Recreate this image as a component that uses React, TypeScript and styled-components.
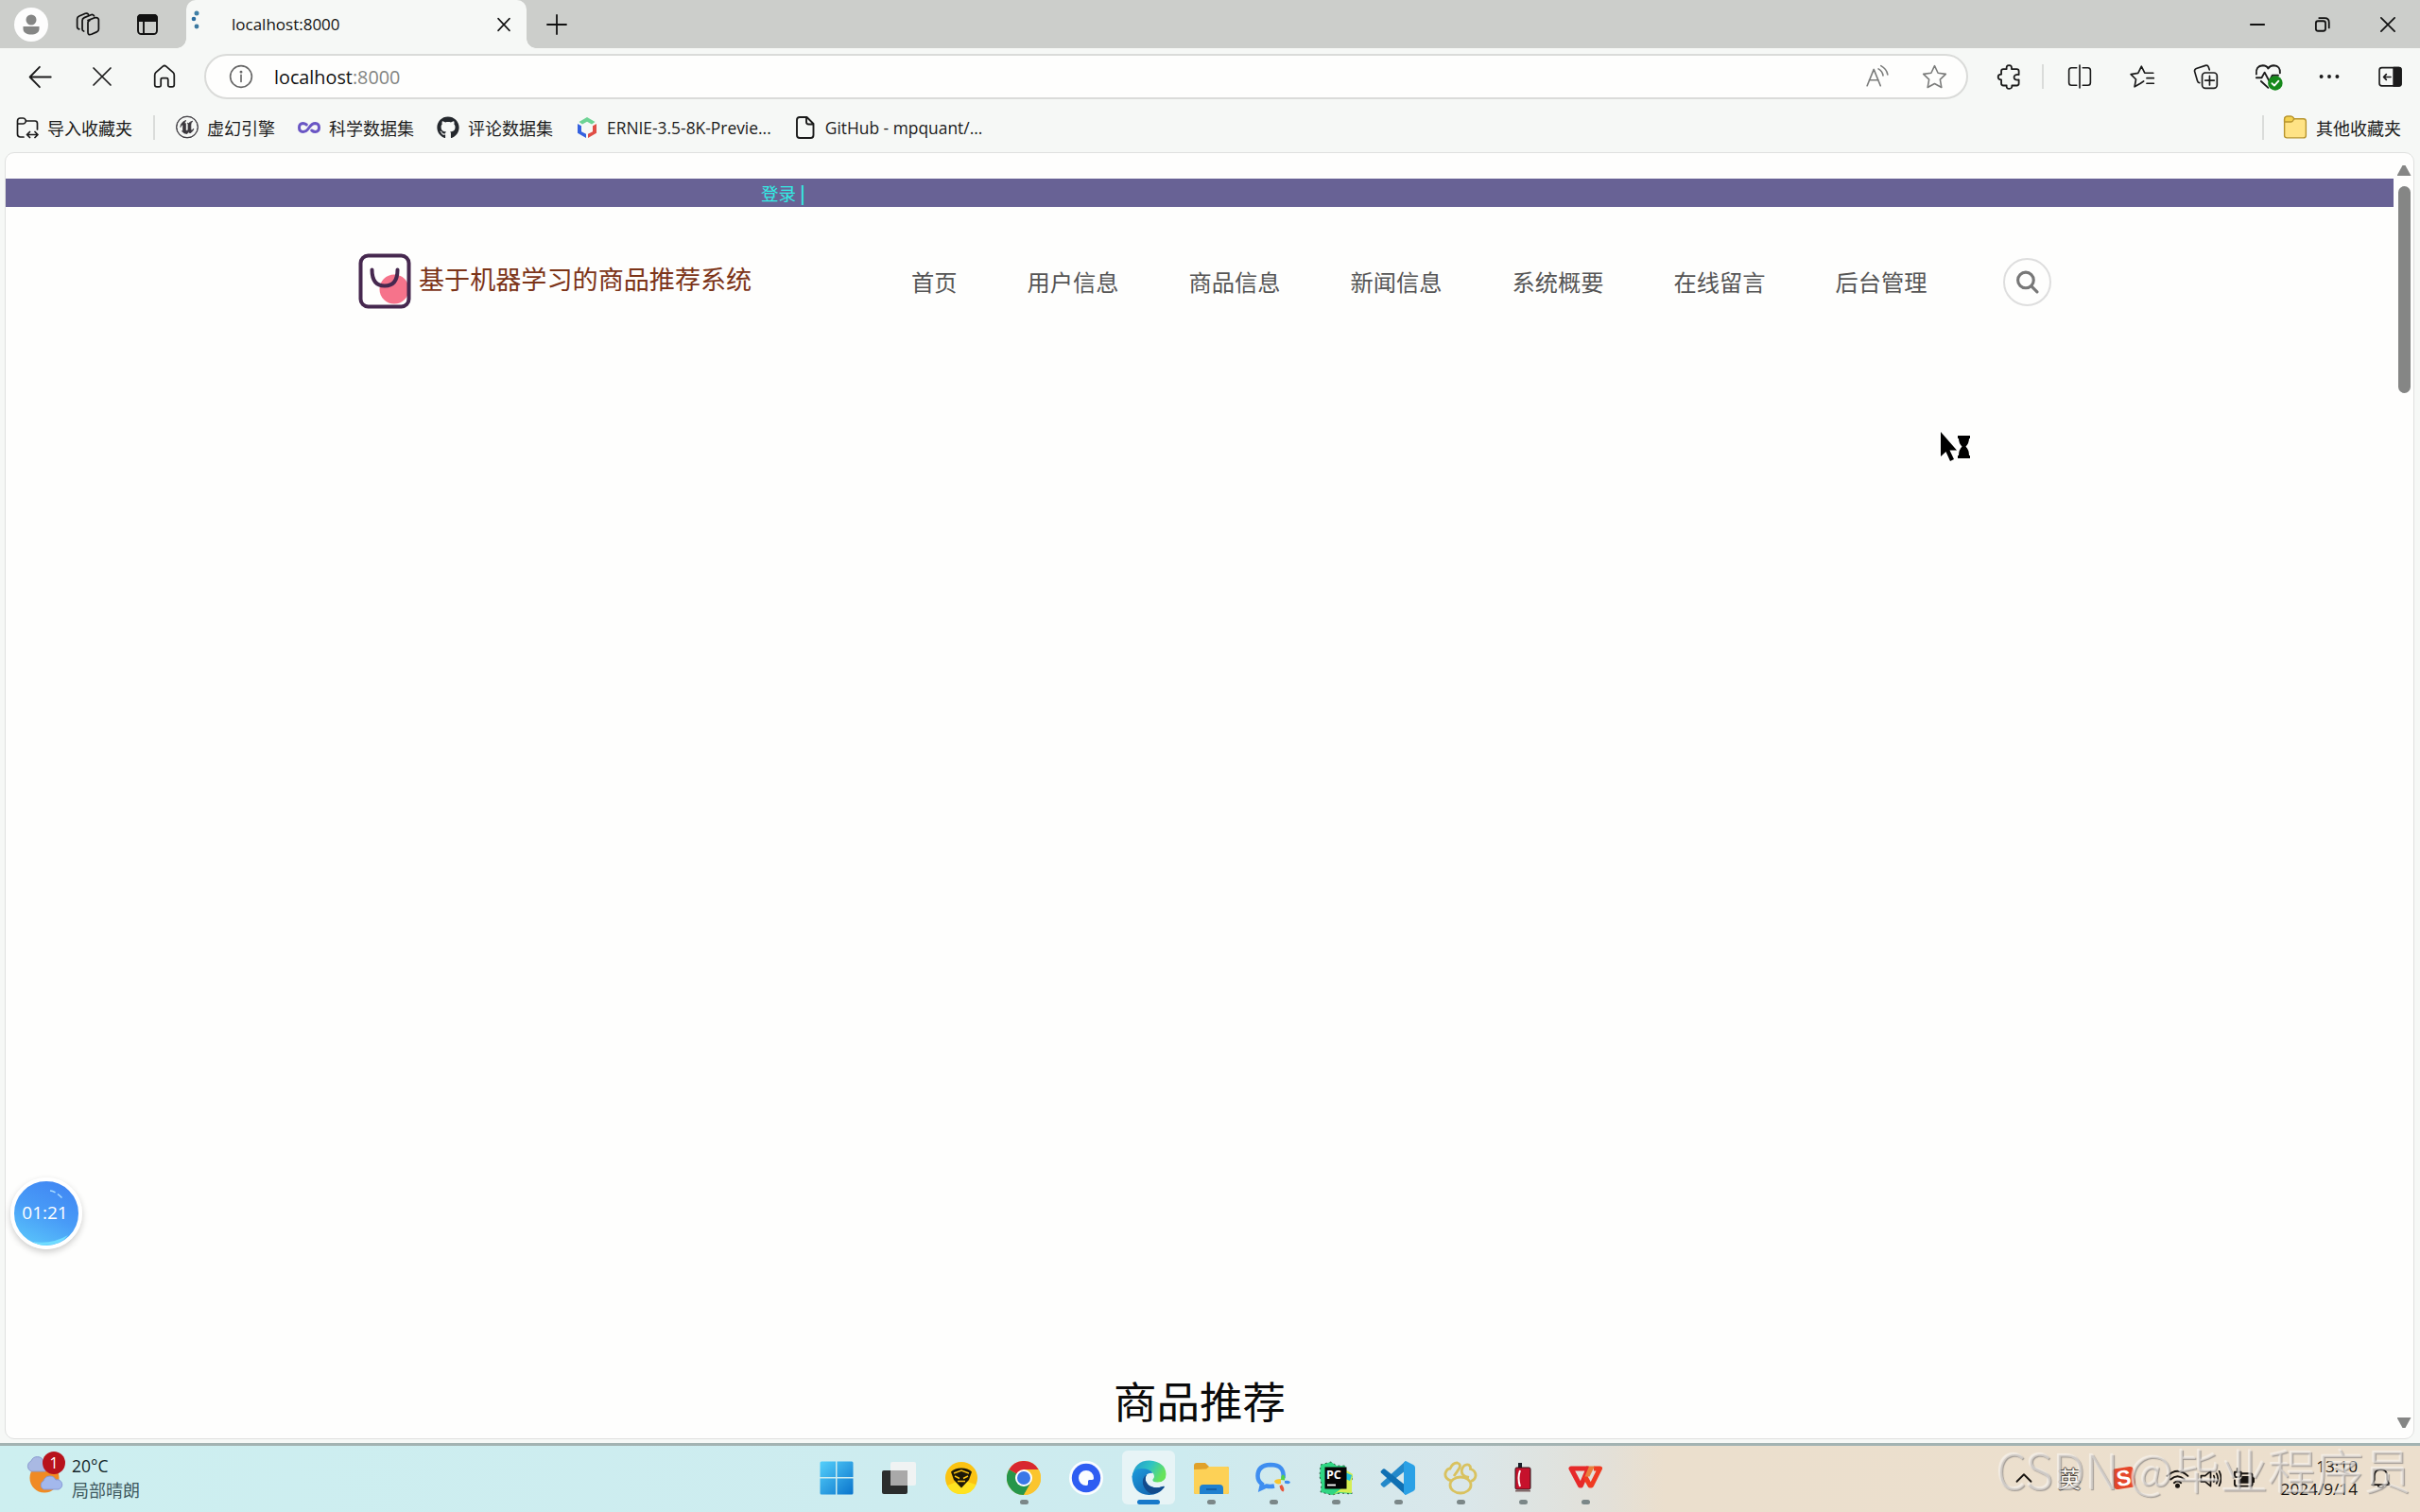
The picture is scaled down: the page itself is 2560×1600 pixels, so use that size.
import { ReactNode } from "react";
import { FaGithub } from "react-icons/fa";
import { SiUnrealengine } from "react-icons/si";
import styled, { createGlobalStyle } from "styled-components";

const menus = ["首页", "用户信息", "商品信息", "新闻信息", "系统概要", "在线留言", "后台管理"];

const App = () => {
  return (
    <Screen>
      <GlobalStyle />
      <TabStrip />
      <Toolbar />
      <Bookmarks />
      <Viewport />
      <Taskbar />
      <Recorder />
      <BusyCursor />
      <Watermark>
        CSDN <span>@毕业程序员</span>
      </Watermark>
    </Screen>
  );
};

const Icon = ({ size = 24, w = 1.7, children }: { size?: number; w?: number; children: ReactNode }) => (
  <IconSvg width={size} height={size} viewBox="0 0 24 24" strokeWidth={w}>
    {children}
  </IconSvg>
);

const TabStrip = () => (
  <TabStripContainer>
    <Slot $w={66}>
      <Avatar>
        <svg width="18" height="22" viewBox="0 0 18 22" fill="#858685">
          <circle cx="9" cy="6" r="5.5" />
          <path d="M.5 13h17v2.500c0 4-4 6-8.500 6s-8.500-2-8.500-6z" />
        </svg>
      </Avatar>
    </Slot>
    <Slot $w={54}>
      <Icon size={26} w={1.6}>
        <path d="M12 8l6-2.500q4-1 4.500 1.500v9.500q0 2-2 2.800l-5 2.200q-3.500 1.200-3.500-2V10q0-1.500 2-2.300z" />
        <path d="M8 18.500q-1.500-.500-1.500-2V8q0-2 2-2.800L15 2.500q1.800-.700 3 1" />
        <path d="M3.500 16.500Q1.500 16 1.500 14V6.500q0-2 2-2.800L9.500 1.200q1.800-.700 3 .800" />
      </Icon>
    </Slot>
    <Slot $w={72}>
      <Icon size={24} w={1.9}>
        <rect x="2" y="2" width="20" height="20" rx="3.500" />
        <path d="M2 8V5q0-3 3-3h14q3 0 3 3v3z" fill="currentColor" />
        <path d="M8 8v14" />
      </Icon>
    </Slot>
    <Tab>
      <Spinner width="14" height="24" viewBox="0 0 14 24">
        <circle cx="8" cy="4" r="2.500" fill="#3f7fa6" />
        <circle cx="5" cy="10" r="2.300" fill="#2b6da0" />
        <circle cx="8" cy="18" r="2.400" fill="#3b789f" />
      </Spinner>
      <TabTitle>localhost:8000</TabTitle>
      <Slot $w={48}>
        <Icon size={18} w={2.1}>
          <path d="M4 3.500l16 17M20 3.500l-16 17" />
        </Icon>
      </Slot>
    </Tab>
    <Slot $w={64}>
      <Icon size={24} w={1.8}>
        <path d="M12 2v20M2 12h20" />
      </Icon>
    </Slot>
    <WindowControls>
      <Slot $w={69}>
        <Icon size={20} w={2.4}>
          <path d="M3.500 12h17" />
        </Icon>
      </Slot>
      <Slot $w={69}>
        <Icon size={18} w={2.4}>
          <rect x="2.500" y="7" width="13.500" height="14" rx="3" />
          <path d="M7 2.800h8q6 0 6 6.200v7.500" />
        </Icon>
      </Slot>
      <Slot $w={69}>
        <Icon size={18} w={2.3}>
          <path d="M2.500 2.500l19 19M21.500 2.500l-19 19" />
        </Icon>
      </Slot>
    </WindowControls>
  </TabStripContainer>
);

const Toolbar = () => (
  <ToolbarContainer>
    <Slot $w={64}>
      <Icon size={27} w={1.6}>
        <path d="M22 12H2.500M11.500 2.500L2.300 12l9.200 9.500" />
      </Icon>
    </Slot>
    <Slot $w={68}>
      <Icon size={24} w={1.7}>
        <path d="M3 3l18 18M21 3L3 21" />
      </Icon>
    </Slot>
    <Slot $w={64}>
      <Icon size={26} w={1.6}>
        <path d="M2.500 10.500Q2.500 9 3.600 8L10.500 2q1.500-1.200 3 0l6.900 6q1.100 1 1.100 2.500V20q0 2-2 2h-2.500q-1.500 0-1.500-1.500V15q0-1.500-1.500-1.500h-4Q8.500 13.500 8.500 15v5.500Q8.500 22 7 22H4.500q-2 0-2-2z" />
      </Icon>
    </Slot>
    <AddressBar>
      <Slot $w={74}>
        <Icon size={26} w={1.5}>
          <circle cx="12" cy="12" r="10.500" />
          <path d="M12 10.500v6.500" />
          <circle cx="12" cy="7.500" r=".600" fill="currentColor" />
        </Icon>
      </Slot>
      <Url>
        localhost<span>:8000</span>
      </Url>
      <Slot $w={60} $color="#7b7c7b">
        <Icon size={26} w={1.5}>
          <path d="M2 21L8.500 5l6.500 16M4 15.500h9M13 4.500q4 2.200 4.500 6.500M15.500 1.500Q21 4.500 22 10" />
        </Icon>
      </Slot>
      <Slot $w={60} $color="#7b7c7b">
        <Icon size={27} w={1.4}>
          <path d={STAR} />
        </Icon>
      </Slot>
    </AddressBar>
    <Slot $w={60}>
      <Icon size={27} w={1.6}>
        <path d="M6.500 4.500h3q-.500-3.500 2.300-3.500t2.400 3.500H19q2 0 2 2v3.300q-4.500-.500-4.500 2.500t4.500 2.300v3.400q0 2-2 2h-4.500q.300 3-2.600 3t-2.400-3h-3q-2 0-2-2v-3.500q-3 0-3-2.500t3-2.500V6.500q0-2 2-2z" />
      </Icon>
    </Slot>
    <Divider $m={5} $h={26} />
    <Slot $w={66}>
      <Icon size={26} w={1.5}>
        <path d="M12 1v22M9 3.500H4q-2.500 0-2.500 2.500v12q0 2.500 2.500 2.500h5M15 3.500h5q2.500 0 2.500 2.500v12q0 2.500-2.500 2.500h-5" />
      </Icon>
    </Slot>
    <Slot $w={67}>
      <Icon size={27} w={1.5}>
        <path d="M13 16l-3 2-5.500 3.200 1.300-7L1 9.400l6.800-1L11 2l3 6.200h8M16 13h6.500M16 18h6.500" />
      </Icon>
    </Slot>
    <Slot $w={67}>
      <Icon size={27} w={1.5}>
        <rect x="8.500" y="8" width="14" height="14.500" rx="3" />
        <path d="M15.500 11v8.500M11.300 15.200h8.500M6 17.500q-1.500-.300-2-2L1.500 7q-.600-2.200 1.500-3l8.500-2.800q2.200-.600 3 1.500l.800 2.500" />
      </Icon>
    </Slot>
    <Slot $w={65}>
      <Icon size={30} w={1.5}>
        <path d="M1.500 10Q.800 3 7 2.600q3.200 0 4.500 2.600Q13 2.600 16.200 2.600 22 3 21.500 9M1.500 13H6l2.500-4.500 4 7.500L15 11h5M5.500 16l6 5.500" />
        <circle cx="17.500" cy="17.500" r="6.200" fill="#16891b" stroke="none" />
        <path d="M14.700 17.700l2 2 3.600-4" stroke="#fff" />
      </Icon>
    </Slot>
    <Slot $w={64}>
      <Icon size={24} w={0.1}>
        <g fill="currentColor">
          <circle cx="3.600" cy="12" r="1.900" />
          <circle cx="12" cy="12" r="1.900" />
          <circle cx="20.400" cy="12" r="1.900" />
        </g>
      </Icon>
    </Slot>
    <Slot $w={64}>
      <Icon size={25} w={1.6}>
        <rect x="1" y="2.500" width="22" height="18.500" rx="2.500" />
        <path d="M15.500 2.500H21q2 0 2 2V19q0 2-2 2h-5.500z" fill="currentColor" />
        <path d="M12.500 12H5.500M8 9.300L5.300 12 8 14.700" />
      </Icon>
    </Slot>
  </ToolbarContainer>
);

const Bookmarks = () => (
  <BookmarksContainer>
    <Bookmark>
      <Icon size={26} w={1.7}>
        <path d="M8 22H4.500Q1.500 22 1.500 19V5q0-3 3-3h3q1.500 0 2.200 1.300L10.500 5H20q2.500 0 2.500 2.500V14M1.500 8h6q1.500 0 2.200-1.300L10.500 5M12 19.500h10.500M14.500 16.500l-3 3 3 3M20 16.500l3 3-3 3" />
      </Icon>
      导入收藏夹
    </Bookmark>
    <Divider $m={-2} $h={26} />
    <Bookmark>
      <SiUnrealengine size={23} color="#3a373c" stroke="#3a373c" strokeWidth={0.8} overflow="visible" />
      虚幻引擎
    </Bookmark>
    <Bookmark>
      <Icon size={24} w={3}>
        <g stroke="#6a56c4">
          <path d="M9.300 9Q7.500 7.500 5.500 7.500q-4 .200-4 4.500t4 4.500q3.500 0 6.500-4.500t6.500-4.500q4 .200 4 4.500t-4 4.500q-2 0-3.800-1.500" />
        </g>
      </Icon>
      科学数据集
    </Bookmark>
    <Bookmark>
      <FaGithub size={24} color="#24282d" />
      评论数据集
    </Bookmark>
    <Bookmark>
      <svg width="24" height="24" viewBox="0 0 24 24">
        <path d="M12 1l8.500 5-3.500 2.500-5-2.800-5 2.800L3.500 6z" fill="#6dd394" />
        <path d="M2 8l4 2.200v6l5 2.600V23l-9-5.200z" fill="#3461df" />
        <path d="M22 8l-4 2.200v6l-5 2.600V23l9-5.200z" fill="#e04e45" />
      </svg>
      <Latin $size={17.4}>ERNIE-3.5-8K-Previe...</Latin>
    </Bookmark>
    <Bookmark>
      <Icon size={24} w={1.9}>
        <path d="M6 1h7.500l7 7v12q0 3-3 3H6q-3 0-3-3V4q0-3 3-3zM13 1v5q0 2.500 2.500 2.500h5" />
      </Icon>
      <Latin $size={17.4}>GitHub - mpquant/...</Latin>
    </Bookmark>
    <OtherBookmarks>
      <Divider $m={0} $h={26} />
      <Icon size={26} w={1.3}>
        <g stroke="#b8952e">
          <path d="M1.500 20V4q0-3 3-3H8q1.500 0 3 2.500h9q2.500 0 2.500 2.500v13.500q0 2.500-2.500 2.500H4q-2.500 0-2.500-2z" fill="#ffe385" />
          <path d="M1.500 6.500H8q1.500-.200 3-3Q9.500 1 8 1H4.500q-3 0-3 3z" fill="#f4d14e" />
        </g>
      </Icon>
      其他收藏夹
    </OtherBookmarks>
  </BookmarksContainer>
);

const Viewport = () => (
  <ViewportFrame>
    <Page>
      <PageBody>
        <LoginBar>
          登录 <b>|</b>
        </LoginBar>
        <Header>
          <svg width="57" height="59" viewBox="0 0 57 59">
            <circle cx="38" cy="38" r="15.500" fill="#f6738b" />
            <rect x="2.500" y="2.500" width="51" height="54" rx="8" fill="none" stroke="#46284f" strokeWidth="4" />
            <path d="M14.500 17.500q0 17 13.500 17t13.500-17" fill="none" stroke="#46284f" strokeWidth="4" strokeLinecap="round" />
          </svg>
          <SiteName>基于机器学习的商品推荐系统</SiteName>
          <Menu>
            {menus.map((menu) => (
              <li key={menu}>{menu}</li>
            ))}
          </Menu>
          <SearchButton>
            <Icon size={25} w={3}>
              <circle cx="10.500" cy="10" r="8" />
              <path d="M16.500 16.500L22 22" />
            </Icon>
          </SearchButton>
        </Header>
        <SectionTitle>商品推荐</SectionTitle>
      </PageBody>
      <Scrollbar>
        <Arrow />
        <Thumb />
        <Arrow $down />
      </Scrollbar>
    </Page>
  </ViewportFrame>
);

const Recorder = () => (
  <RecorderBubble>
    <svg width="68" height="68" viewBox="0 0 68 68">
      <path d="M38 10q6 .500 14 9" fill="none" stroke="#a9dcff" strokeWidth="1.500" strokeDasharray="6 3" />
      <path d="M20 64q20 3 37-7-8 11-25 11-7-.500-12-4z" fill="#70dcff" />
    </svg>
    <span>01:21</span>
  </RecorderBubble>
);

const BusyCursor = () => (
  <CursorSvg width="36" height="34" viewBox="0 0 36 34">
    <path d="M1 1v26l5.500-5 4.500 10 4-2-4.500-9.500h7.500z" />
    <path d="M19 5h13v3h-1q0 5-3.500 8.500Q31 20 31 26h1v3H19v-3h1q0-6 3.500-9.500Q20 13 20 8h-1z" />
  </CursorSvg>
);

const Taskbar = () => (
  <TaskbarContainer>
    <Weather>
      <WeatherIcon>
        <svg width="40" height="42" viewBox="0 0 40 42">
          <circle cx="19" cy="24" r="15.500" fill="#f08a24" />
          <path d="M5 17a6 6 0 010-11 7 7 0 0113 0 6 6 0 012 11z" fill="#a9b9e3" stroke="#8a9bd0" />
          <path d="M18 36a5 5 0 010-9 7 7 0 0113-1 5 5 0 013 10z" fill="#a3b8ec" stroke="#8799d6" />
        </svg>
        <Badge>1</Badge>
      </WeatherIcon>
      <WeatherText>
        <Latin $size={17.5}>20°C</Latin>
        <span>局部晴朗</span>
      </WeatherText>
    </Weather>
    <Apps>
      <TaskApp>
        <svg width="36" height="36" viewBox="0 0 36 36">
          <defs>
            <linearGradient id="win" x1="0" y1="0" x2="1" y2="1">
              <stop offset="0" stopColor="#55d0fb" />
              <stop offset="1" stopColor="#0a74cc" />
            </linearGradient>
          </defs>
          <path fill="url(#win)" d="M2 .500h15v16.500H.500V2Q.500.500 2 .500zM18.500.500H34q1.500 0 1.500 1.500v15h-17zM.500 18.500H17v17H2q-1.500 0-1.500-1.500zM18.500 18.500h17V34q0 1.500-1.500 1.500H18.500z" />
        </svg>
      </TaskApp>
      <TaskApp>
        <svg width="36" height="36" viewBox="0 0 36 36">
          <rect x="0" y="10" width="27" height="25" rx="2" fill="#2b2d2d" />
          <rect x="9" y="1" width="27" height="25" rx="2" fill="#f3f3f3" opacity=".92" />
          <path d="M9 10h18v16H9z" fill="#a9a9a9" />
        </svg>
      </TaskApp>
      <TaskApp>
        <svg width="36" height="36" viewBox="0 0 36 36">
          <circle cx="18" cy="18" r="17" fill="#fbc312" />
          <path d="M18 35q12 0 15.500-10L18 20 3 26q4 9 15 9z" fill="#ffe320" />
          <path d="M18 7.500q7 0 11 4L26 20l-8 8.500L10 20l-3-8.500q4-4 11-4z" fill="#1c1808" />
          <path d="M10 13l8-3 8 3M11 16l5 2.500M25 16l-5 2.500M14 21.500h8" stroke="#fbc312" strokeWidth="1.500" fill="none" />
        </svg>
      </TaskApp>
      <TaskApp $open>
        <svg width="36" height="36" viewBox="0 0 36 36">
          <circle cx="18" cy="18" r="18" fill="#f9c22e" />
          <path d="M18 18L2.400 9A18 18 0 0133.600 9H18z" fill="#d8282f" />
          <path d="M2.400 9A18 18 0 0018 36l7.800-13.500L18 18z" fill="#26964a" />
          <path d="M33.600 9H18l7.800 13.500L18 36A18 18 0 0033.600 9z" fill="#fbc52d" />
          <circle cx="18" cy="18" r="9" fill="#fff" />
          <circle cx="18" cy="18" r="7" fill="#3b78e7" />
        </svg>
      </TaskApp>
      <TaskApp>
        <svg width="36" height="36" viewBox="0 0 36 36">
          <circle cx="18" cy="18" r="18" fill="#fbfdff" />
          <circle cx="18" cy="18" r="15.200" fill="#2f5df2" />
          <path d="M26 18a8 8 0 10-8 8c2 0 2-1 2-4 0-1.500.500-2 2-2 3 0 4 0 4-2z" fill="#fbfdff" />
        </svg>
      </TaskApp>
      <TaskApp $active>
        <EdgeLogo />
      </TaskApp>
      <TaskApp $open>
        <svg width="40" height="36" viewBox="0 0 40 36">
          <path d="M2 5q0-3 3-3h9l4 4h19q2 0 2 2v25q0 2-2 2H4q-2 0-2-2z" fill="#e0a12a" />
          <path d="M2 9l13-.500 3-2.500h19q2 0 2 2v25q0 2-2 2H4q-2 0-2-2z" fill="#fdd156" />
          <path d="M8 35v-6q0-4 4-4h17q4 0 4 4v6z" fill="#1f80cf" />
          <path d="M15 30h11" stroke="#1461a8" strokeWidth="2" />
        </svg>
      </TaskApp>
      <TaskApp $open>
        <svg width="38" height="34" viewBox="0 0 38 34">
          <path d="M29.500 17Q31 3 16 3 2.500 3.500 2.500 15q0 5 4.500 8.500L6 28l5.500-2.500q4 1 8.500 0" fill="none" stroke="#3f8ef0" strokeWidth="4.500" />
          <path d="M27 19q0-5 2-5.500 3 .500 2 6z" fill="#53d345" />
          <path d="M31 20q5-1 6 1.500-1 3-6 1z" fill="#3f8ef0" />
          <path d="M28 24q4 5 1.500 7.500-3-.500-4-6z" fill="#e8563c" />
          <path d="M27 18q-7 0-7 3 2 3.500 7 2z" fill="#f9c62e" />
        </svg>
      </TaskApp>
      <TaskApp $open>
        <svg width="38" height="38" viewBox="0 0 38 38">
          <path d="M3 5l11-3 6 4 9 0 1 7 7 4-2 9 1 10-12-1-9 2-12-3 1-8-2-9z" fill="#2fd683" stroke="#1d3a26" strokeWidth=".800" strokeDasharray="2 3" />
          <path d="M29 10l8 5-1 7 0 13-14-1-6 3 13-10z" fill="#d5ee52" />
          <path d="M29 13l7 3-2 6-5-2z" fill="#21c1dc" />
          <rect x="7.500" y="7.500" width="23" height="23" fill="#050505" />
          <text x="9" y="19.500" fontFamily="Open Sans, sans-serif" fontWeight="700" fontSize="12.500" fill="#fff">PC</text>
          <path d="M10 26.500h9" stroke="#fff" strokeWidth="1.800" />
        </svg>
      </TaskApp>
      <TaskApp $open>
        <svg width="38" height="38" viewBox="0 0 38 38">
          <path d="M27 1v10L5 28.500q-1 .500-2 0L1 26.500q-1-1 0-2z" fill="#2489ca" />
          <path d="M27 37V27L5 9.500q-1-.500-2 0L1 11.500q-1 1 0 2z" fill="#1070b3" />
          <path d="M27 1l8 4q2 1 2 3v22q0 2-2 3l-8 4-2-1.500v-33z" fill="#2ba1e6" />
        </svg>
      </TaskApp>
      <TaskApp $open>
        <svg width="36" height="36" viewBox="0 0 36 36" fill="none" stroke="#d9c25f" strokeWidth="2.800">
          <ellipse cx="18" cy="25.500" rx="11" ry="8.500" />
          <path d="M8.500 21Q1 19 2 13q1.500-5 5-5Q9.500 2 14.500 2q4.500 1.500 2 6-2.500 4-5.500 8M27 17.500Q18 16 19.500 9q2-6 7-5 2.500 1.500 2 4.500Q34 10 34 15.500q-.500 4.500-5 6" />
        </svg>
      </TaskApp>
      <TaskApp $open>
        <svg width="24" height="36" viewBox="0 0 24 36">
          <path d="M7 2h4v5h8v4H5V7h2z" fill="#1b1f2a" />
          <rect x="4" y="7" width="16" height="23" rx="1.500" fill="#c6112c" stroke="#2b1418" />
          <path d="M9 10q-3 8 0 17" stroke="#fff" strokeWidth="2" fill="none" />
          <path d="M4 31h16v1.500H4z" fill="#7d6262" />
        </svg>
      </TaskApp>
      <TaskApp $open>
        <svg width="36" height="26" viewBox="0 0 36 26">
          <path d="M22 1L13.500 21h-1L3 3h19" fill="none" stroke="#e62a2a" strokeWidth="5" strokeLinejoin="round" />
          <path d="M17.500 11l5.500 10h1.500L33.500 3H27" fill="none" stroke="#f03b22" strokeWidth="5" strokeLinejoin="round" />
          <path d="M22 .500h6l-5.500 11h-5z" fill="#e9803d" />
        </svg>
      </TaskApp>
    </Apps>
    <Tray>
      <Slot $w={48}>
        <Icon size={18} w={2.4}>
          <path d="M2 17L12 7l10 10" />
        </Icon>
      </Slot>
      <InputMode>英</InputMode>
      <Slot $w={66}>
        <Sogou>S</Sogou>
      </Slot>
      <Slot $w={34}>
        <Icon size={25} w={1.8}>
          <path d="M1.500 9.500Q12-.500 22.500 9.500M5 13q7-6.500 14 0M8.500 16.500q3.500-3.200 7 0" />
          <circle cx="12" cy="19.500" r="1.500" fill="currentColor" />
        </Icon>
      </Slot>
      <Slot $w={36}>
        <Icon size={23} w={1.8}>
          <path d="M1.500 9v6.500H6l6 5V4L6 9zM15.500 9q1.500 3 0 6.500M18.500 6.500q3 5 0 11M21.500 4q4 8 0 16" />
        </Icon>
      </Slot>
      <Slot $w={34}>
        <Icon size={23} w={2}>
          <path d="M9 6.500h10q2.500 0 2.500 2.500v9q0 2.500-2.500 2.500H4.500Q2 20.500 2 18v-4M23 11v5M5 1v4M2 5h7v3q0 2-3.500 2.500T2 8z" />
          <path d="M10 9.500h8.500v8H6v-4q4-.500 4-4z" fill="currentColor" stroke="none" />
        </Icon>
      </Slot>
      <Clock>
        <span>13:10</span>
        <span>2024/9/14</span>
      </Clock>
      <Slot $w={48}>
        <Icon size={23} w={1.8}>
          <path d="M12 2q-7 .500-7 7.500v4L2.500 19h19L19 13.500v-4Q19 2.500 12 2zM9 19q0 3 3 3t3-3" />
        </Icon>
      </Slot>
    </Tray>
  </TaskbarContainer>
);

const EdgeLogo = () => (
  <svg width="37" height="37" viewBox="0 0 37 37">
    <defs>
      <linearGradient id="edgeTop" x1="0" y1="0" x2="1" y2=".400">
        <stop offset="0" stopColor="#2295cf" />
        <stop offset=".550" stopColor="#2fc3c4" />
        <stop offset="1" stopColor="#66e35b" />
      </linearGradient>
      <linearGradient id="edgeBody" x1="0" y1="0" x2="1" y2="1">
        <stop offset="0" stopColor="#1d9bdc" />
        <stop offset="1" stopColor="#0f5aa8" />
      </linearGradient>
    </defs>
    <path d="M.500 18Q3 .500 19 .500q17 1.500 17.500 14.500 0 8.500-9 8.500-6 0-5-3 3-3 0-7Q14 5 .500 18z" fill="url(#edgeTop)" />
    <path d="M.500 18q1-9 10-9 9 0 12 5-4-1-6.500 1.500-3 5 1 10 6 6 16 2.500 2-1 1.500 1-6 8-16 8Q1.500 36 .500 18z" fill="url(#edgeBody)" />
    <path d="M16 15.500q-5 3-4 10 2 7 9 10.500 9-1 13.500-7 .500-2-1.500-1-10 3.500-16-2.500-4-5-1-10z" fill="#124b8c" />
  </svg>
);

const STAR = "M12 1.500l3.200 6.700 7.300 1-5.300 5.100 1.300 7.500L12 18.200l-6.500 3.600 1.300-7.500L1.500 9.200l7.300-1z";

const LATIN = `"Open Sans", "Noto Sans CJK SC", sans-serif`;

const GlobalStyle = createGlobalStyle`
  * {
    box-sizing: border-box;
  }
  body {
    margin: 0;
    overflow: hidden;
    font-family: "Noto Sans CJK SC", sans-serif;
  }
`;

const Screen = styled.div`
  position: relative;
  display: flex;
  flex-direction: column;
  width: 2560px;
  height: 1600px;
  overflow: hidden;
  background: #f6f8f6;
`;

const IconSvg = styled.svg`
  flex: none;
  fill: none;
  stroke: currentColor;
  stroke-linecap: round;
  stroke-linejoin: round;
`;

const Slot = styled.div<{ $w: number; $color?: string }>`
  display: flex;
  flex: none;
  justify-content: center;
  align-items: center;
  width: ${({ $w }) => $w}px;
  color: ${({ $color }) => $color || "inherit"};
`;

const Divider = styled.div<{ $m: number; $h: number }>`
  flex: none;
  width: 2px;
  height: ${({ $h }) => $h}px;
  margin: 0 ${({ $m }) => $m}px;
  background: #dadcda;
`;

const Latin = styled.span<{ $size: number }>`
  font-family: ${LATIN};
  font-size: ${({ $size }) => $size}px;
`;

const TabStripContainer = styled.div`
  display: flex;
  flex: none;
  height: 51px;
  color: #111;
  background: #cccecb;
`;

const Avatar = styled.div`
  display: flex;
  justify-content: center;
  align-items: center;
  width: 36px;
  height: 36px;
  border-radius: 50%;
  background: #fdfdfd;
`;

const Tab = styled.div`
  position: relative;
  display: flex;
  align-items: center;
  width: 360px;
  margin-left: 5px;
  border-radius: 10px 10px 0 0;
  background: #f6f8f6;
  &::before,
  &::after {
    content: "";
    position: absolute;
    bottom: 0;
    width: 10px;
    height: 10px;
  }
  &::before {
    left: -10px;
    background: radial-gradient(circle at 0 0, #cccecb 9.5px, #f6f8f6 10px);
  }
  &::after {
    right: -10px;
    background: radial-gradient(circle at 100% 0, #cccecb 9.5px, #f6f8f6 10px);
  }
`;

const Spinner = styled.svg`
  align-self: flex-start;
  margin: 10px 31px 0 3px;
`;

const TabTitle = styled.div`
  flex: 1;
  font-family: ${LATIN};
  font-size: 17px;
`;

const WindowControls = styled.div`
  display: flex;
  margin-left: auto;
`;

const ToolbarContainer = styled.div`
  display: flex;
  flex: none;
  align-items: center;
  height: 60px;
  padding-left: 10px;
  color: #1b1b1b;
`;

const AddressBar = styled.div`
  display: flex;
  align-items: center;
  width: 1869px;
  height: 48px;
  margin: 0 13px 0 10px;
  padding-right: 4px;
  border: 2px solid #dadbd9;
  border-radius: 24px;
  color: #666;
  background: #fefefd;
`;

const Url = styled.div`
  flex: 1;
  margin-left: -2px;
  color: #111;
  font-family: ${LATIN};
  font-size: 19.8px;
  span {
    color: #838583;
  }
`;

const BookmarksContainer = styled.div`
  display: flex;
  flex: none;
  align-items: center;
  gap: 24px;
  height: 49px;
  padding: 0 20px 2px 17px;
  color: #1b1b1b;
  font-size: 18px;
`;

const Bookmark = styled.div`
  display: flex;
  align-items: center;
  gap: 9px;
  svg {
    flex: none;
    width: 24px;
  }
`;

const OtherBookmarks = styled(Bookmark)`
  margin-left: auto;
  svg {
    width: 26px;
    margin-left: 11px;
  }
`;

const ViewportFrame = styled.div`
  flex: none;
  height: 1367px;
  padding: 1px 6px 4px 5px;
`;

const Page = styled.div`
  display: flex;
  height: 100%;
  overflow: hidden;
  border: 1px solid #dfe0df;
  border-radius: 10px;
  background: #fefefd;
`;

const PageBody = styled.div`
  display: flex;
  flex: none;
  flex-direction: column;
  width: 2526px;
  padding-top: 27px;
`;

const LoginBar = styled.div`
  height: 30px;
  padding-left: 799px;
  color: #33ece4;
  font-size: 18.5px;
  line-height: 30px;
  background: #686295;
`;

const Header = styled.div`
  display: flex;
  align-items: center;
  margin-top: 49px;
  padding-left: 373px;
`;

const SiteName = styled.div`
  width: 521px;
  margin: -6px 0 0 7px;
  color: #7c3418;
  font-size: 27.1px;
  line-height: 40px;
`;

const Menu = styled.ul`
  display: flex;
  gap: 74px;
  margin: 0;
  padding: 0;
  color: #555;
  font-size: 24.25px;
  line-height: 40px;
  list-style: none;
`;

const SearchButton = styled.div`
  display: flex;
  justify-content: center;
  align-items: center;
  width: 51px;
  height: 51px;
  margin: 2px 0 0 80px;
  border: 2px solid #dedede;
  border-radius: 50%;
  color: #777;
`;

const SectionTitle = styled.div`
  margin-top: auto;
  padding-bottom: 11px;
  color: #0a0a0a;
  font-size: 45.5px;
  line-height: 60px;
  text-align: center;
`;

const Scrollbar = styled.div`
  display: flex;
  flex-direction: column;
  align-items: center;
  flex: 1;
  padding: 13px 0 11px 1px;
`;

const Arrow = styled.div<{ $down?: boolean }>`
  width: 15px;
  height: 11px;
  margin-top: ${({ $down }) => ($down ? "auto" : "0")};
  background: #858685;
  clip-path: ${({ $down }) =>
    $down ? "polygon(0 0, 100% 0, 60% 100%, 40% 100%)" : "polygon(40% 0, 60% 0, 100% 100%, 0 100%)"};
`;

const Thumb = styled.div`
  width: 13px;
  height: 219px;
  margin-top: 11px;
  border-radius: 7px;
  background: #858685;
`;

const TaskbarContainer = styled.div`
  display: flex;
  flex: none;
  height: 73px;
  border-top: 3px solid #a3b3b2;
  background: linear-gradient(90deg, #cdeff0 0, #cdebef 1250px, #dae7ea 1550px, #e3e0d8 1700px, #ebdfcd 1760px, #ecdfcd 100%);
`;

const Weather = styled.div`
  display: flex;
  width: 852px;
  padding: 6px 0 0 28px;
`;

const WeatherIcon = styled.div`
  position: relative;
  width: 48px;
  padding-top: 4px;
`;

const Badge = styled.div`
  position: absolute;
  top: 0;
  left: 17px;
  width: 24px;
  height: 24px;
  border-radius: 50%;
  color: #fff;
  font-family: ${LATIN};
  font-size: 16px;
  line-height: 24px;
  text-align: center;
  background: #b8131c;
`;

const WeatherText = styled.div`
  display: flex;
  flex-direction: column;
  color: #3f5a5f;
  font-size: 18px;
  line-height: 21px;
  ${Latin} {
    color: #14262a;
    line-height: 30px;
  }
`;

const Apps = styled.div`
  display: flex;
  gap: 10px;
  padding: 5px;
`;

const TaskApp = styled.div<{ $open?: boolean; $active?: boolean }>`
  position: relative;
  display: flex;
  justify-content: center;
  align-items: center;
  width: 56px;
  height: 57px;
  border-radius: 6px;
  background: ${({ $active }) => ($active ? "#e7f4f6" : "transparent")};
  &::after {
    content: "";
    position: absolute;
    bottom: 0;
    width: ${({ $active }) => ($active ? 24 : 9)}px;
    height: 5px;
    border-radius: 3px;
    background: ${({ $open, $active }) => ($active ? "#1679ca" : $open ? "#7b8788" : "transparent")};
  }
`;

const Tray = styled.div`
  display: flex;
  align-items: center;
  margin-left: auto;
  padding: 0 18px 2px 0;
  color: #17130f;
`;

const InputMode = styled.div`
  width: 55px;
  padding-left: 12px;
  color: #faf7f2;
  font-size: 24px;
  line-height: 40px;
  text-shadow: 1px 0 #4a443d, -1px 0 #4a443d, 0 1px #4a443d, 0 -1px #4a443d;
`;

const Sogou = styled.div`
  width: 23px;
  height: 22px;
  margin-left: -14px;
  border-radius: 4px;
  color: #fff;
  font: 700 23px/22px "Liberation Sans", sans-serif;
  text-align: center;
  background: #e5472a;
  transform: rotate(-8deg);
`;

const Clock = styled.div`
  display: flex;
  flex-direction: column;
  width: 104px;
  font-family: ${LATIN};
  font-size: 17.2px;
  line-height: 24px;
  text-align: right;
`;

const RecorderBubble = styled.div`
  position: absolute;
  top: 1246px;
  left: 11px;
  width: 76px;
  height: 76px;
  border: 4px solid #fff;
  border-radius: 50%;
  color: #fff;
  font-family: ${LATIN};
  background: linear-gradient(205deg, #3f82f2, #489bf7 50%, #5ccbfb);
  box-shadow: 0 3px 7px rgba(0, 0, 0, 0.2);
  span {
    position: absolute;
    inset: 0 3px 0 0;
    font-size: 19px;
    line-height: 67px;
    text-align: center;
  }
`;

const CursorSvg = styled.svg`
  position: absolute;
  top: 456px;
  left: 2052px;
`;

const Watermark = styled.div`
  position: absolute;
  top: 1517px;
  left: 2112px;
  color: rgba(236, 231, 226, 0.55);
  font-size: 50.5px;
  font-weight: 300;
  line-height: 74px;
  white-space: nowrap;
  text-shadow: 1px 1px 1px rgba(90, 90, 95, 0.5), -1px -1px 1px rgba(255, 255, 255, 0.5);
`;

export default App;
